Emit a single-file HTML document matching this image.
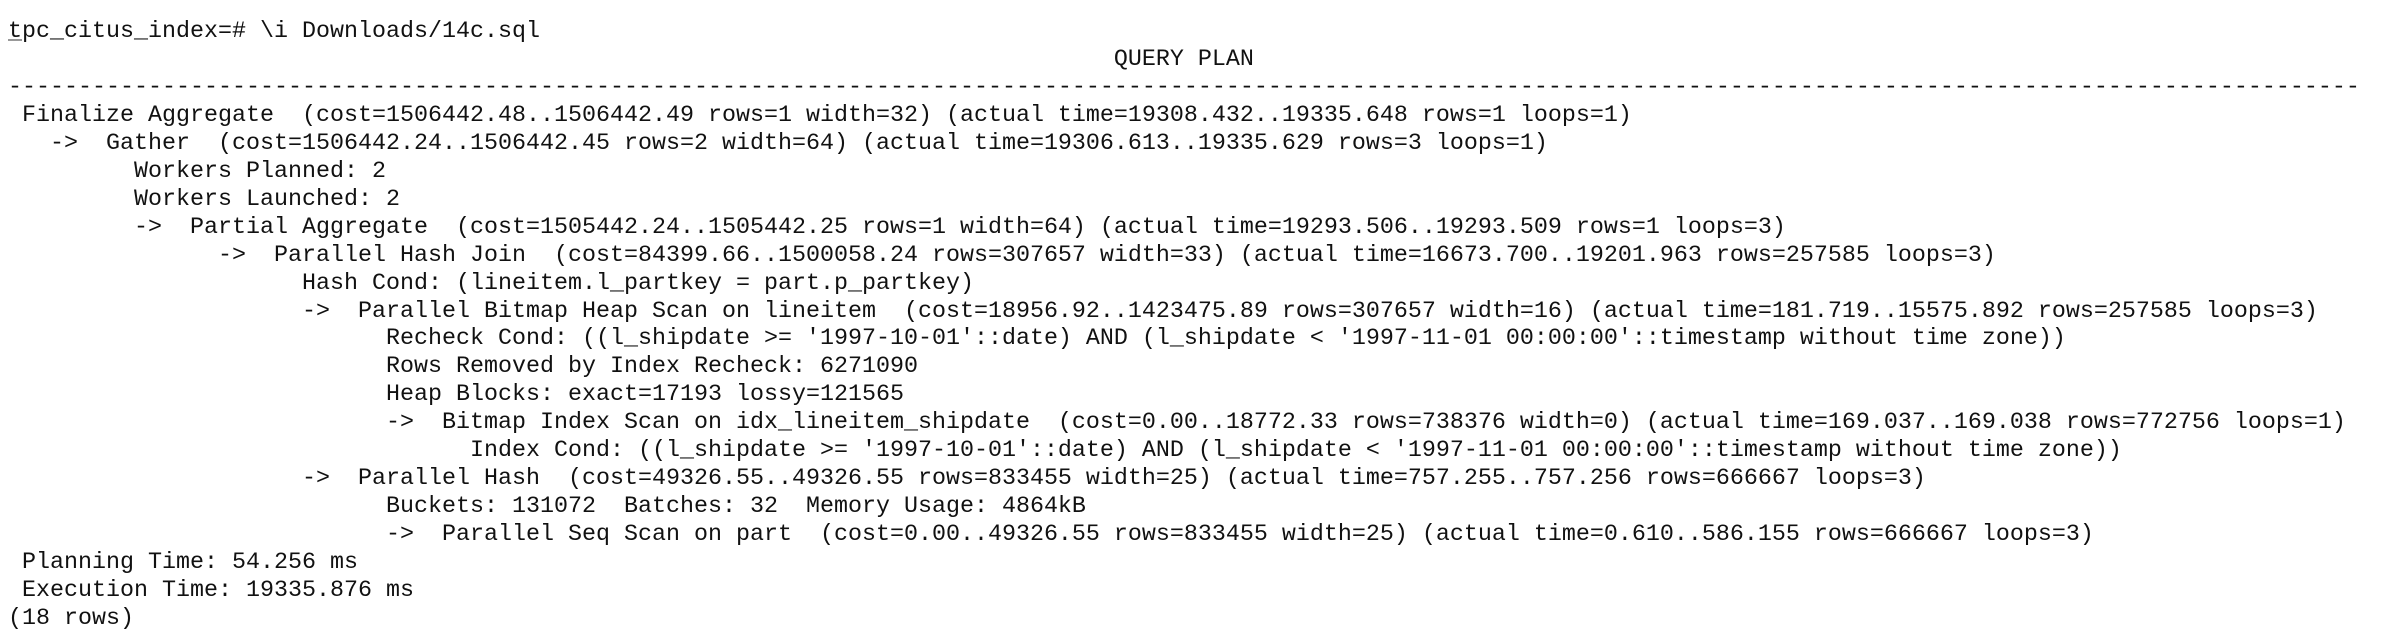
<!DOCTYPE html>
<html><head><meta charset="utf-8"><style>
html,body{margin:0;padding:0;background:#fff;width:2390px;height:642px;overflow:hidden}
pre{margin:0;position:absolute;left:8px;top:19px;font-family:"Liberation Mono","DejaVu Sans Mono",monospace;font-size:23.33px;line-height:27.95px;color:#111;white-space:pre}
u{text-decoration:underline;text-decoration-color:#999}
</style></head><body>
<pre><u>t</u>pc_citus_index=# \i Downloads/14c.sql
                                                                               QUERY PLAN
------------------------------------------------------------------------------------------------------------------------------------------------------------------------
 Finalize Aggregate  (cost=1506442.48..1506442.49 rows=1 width=32) (actual time=19308.432..19335.648 rows=1 loops=1)
   -&gt;  Gather  (cost=1506442.24..1506442.45 rows=2 width=64) (actual time=19306.613..19335.629 rows=3 loops=1)
         Workers Planned: 2
         Workers Launched: 2
         -&gt;  Partial Aggregate  (cost=1505442.24..1505442.25 rows=1 width=64) (actual time=19293.506..19293.509 rows=1 loops=3)
               -&gt;  Parallel Hash Join  (cost=84399.66..1500058.24 rows=307657 width=33) (actual time=16673.700..19201.963 rows=257585 loops=3)
                     Hash Cond: (lineitem.l_partkey = part.p_partkey)
                     -&gt;  Parallel Bitmap Heap Scan on lineitem  (cost=18956.92..1423475.89 rows=307657 width=16) (actual time=181.719..15575.892 rows=257585 loops=3)
                           Recheck Cond: ((l_shipdate &gt;= '1997-10-01'::date) AND (l_shipdate &lt; '1997-11-01 00:00:00'::timestamp without time zone))
                           Rows Removed by Index Recheck: 6271090
                           Heap Blocks: exact=17193 lossy=121565
                           -&gt;  Bitmap Index Scan on idx_lineitem_shipdate  (cost=0.00..18772.33 rows=738376 width=0) (actual time=169.037..169.038 rows=772756 loops=1)
                                 Index Cond: ((l_shipdate &gt;= '1997-10-01'::date) AND (l_shipdate &lt; '1997-11-01 00:00:00'::timestamp without time zone))
                     -&gt;  Parallel Hash  (cost=49326.55..49326.55 rows=833455 width=25) (actual time=757.255..757.256 rows=666667 loops=3)
                           Buckets: 131072  Batches: 32  Memory Usage: 4864kB
                           -&gt;  Parallel Seq Scan on part  (cost=0.00..49326.55 rows=833455 width=25) (actual time=0.610..586.155 rows=666667 loops=3)
 Planning Time: 54.256 ms
 Execution Time: 19335.876 ms
(18 rows)
</pre>
</body></html>
